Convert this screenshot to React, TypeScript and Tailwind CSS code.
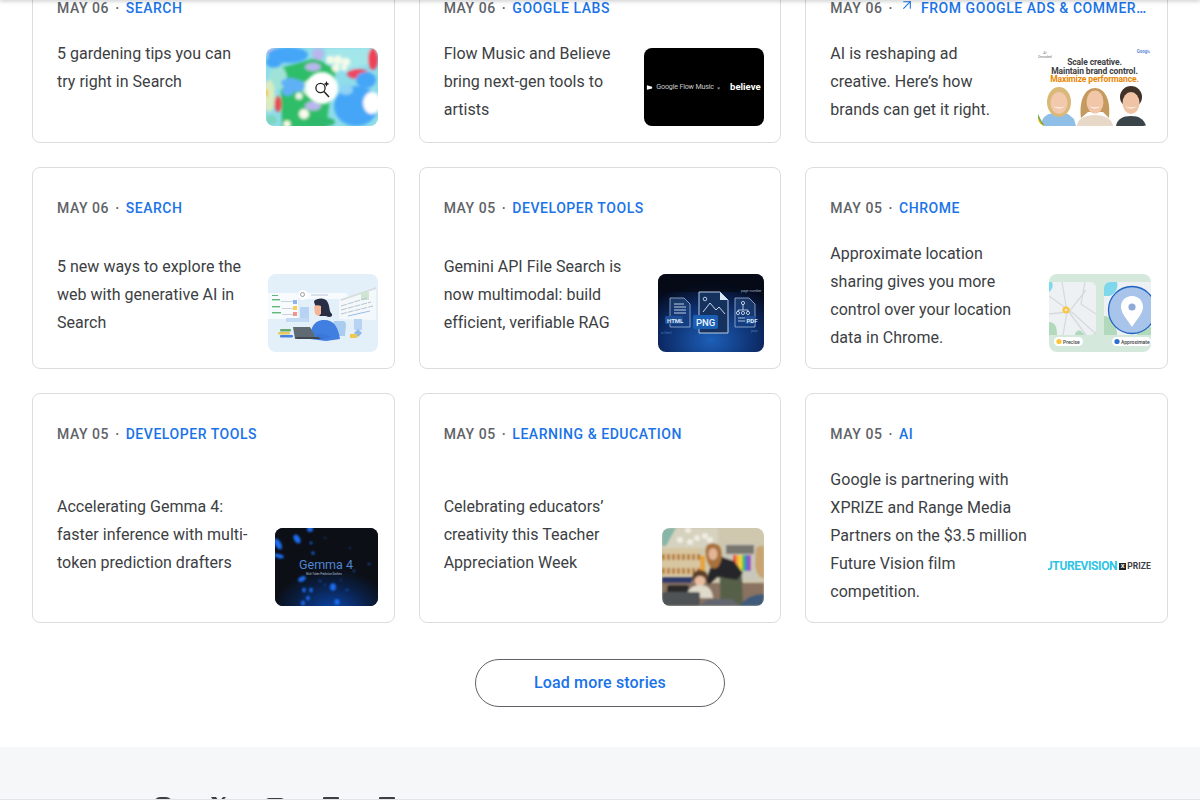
import React from "react";
import { ArrowUpRight } from "lucide-react";

const Flower = () => (
  <svg viewBox="0 0 112 78" className="w-full h-full block">
    <defs>
      <filter id="b1" x="-20%" y="-20%" width="140%" height="140%"><feGaussianBlur stdDeviation="1.5" /></filter>
    </defs>
    <rect width="112" height="78" fill="#8fdcea" />
    <g filter="url(#b1)">
      <path d="M14 20L50 10l20 12-6 28-4 30H16z" fill="#2fbd68" />
      <ellipse cx="12" cy="30" rx="9" ry="12" fill="#9fe3d8" />
      <ellipse cx="45" cy="40" rx="9" ry="8" fill="#c8f0d6" />
      <path d="M60 0h52v14l-30 8-22-8z" fill="#a3e6ea" />
      <path d="M0 0h14l-4 6H0z" fill="#c3c0f0" />
      <ellipse cx="22" cy="7" rx="20" ry="8" fill="#45a6f8" />
      <ellipse cx="8" cy="14" rx="8" ry="6" fill="#45a6f8" />
      <ellipse cx="52" cy="6" rx="6" ry="6" fill="#b9b6ee" />
      <ellipse cx="47" cy="19" rx="8" ry="4" fill="#b9b6ee" />
      <circle cx="64" cy="12" r="4" fill="#f4fbe8" />
      <circle cx="72" cy="12" r="4.5" fill="#f4fbe8" />
      <circle cx="80" cy="14" r="4" fill="#f4fbe8" />
      <circle cx="70" cy="20" r="4" fill="#f4fbe8" />
      <circle cx="78" cy="20" r="3" fill="#f4fbe8" />
      <ellipse cx="92" cy="26" rx="11" ry="5" fill="#ef4660" />
      <ellipse cx="107" cy="11" rx="5" ry="11" fill="#ef4058" />
      <ellipse cx="24" cy="35" rx="9" ry="5" fill="#5eb0f6" />
      <ellipse cx="32" cy="38" rx="7" ry="6" fill="#5eb0f6" />
      <ellipse cx="22" cy="43" rx="6" ry="5" fill="#5eb0f6" />
      <ellipse cx="3" cy="48" rx="6" ry="16" fill="#d9ecc0" />
      <ellipse cx="0" cy="45" rx="2" ry="4" fill="#f5c518" />
      <ellipse cx="12" cy="56" rx="3.5" ry="8" fill="#ea4a55" />
      <circle cx="33" cy="48" r="3.5" fill="#eef9e8" />
      <ellipse cx="47" cy="58" rx="8" ry="4.5" fill="#b9b6ee" />
      <circle cx="38" cy="66" r="5" fill="#f8fbee" />
      <ellipse cx="90" cy="58" rx="22" ry="20" fill="#45a6f8" />
      <ellipse cx="100" cy="32" rx="10" ry="8" fill="#45a6f8" />
      <ellipse cx="80" cy="42" rx="7" ry="5" fill="#8ed2f6" />
      <ellipse cx="106" cy="55" rx="9" ry="11" fill="#ffffff" />
      <ellipse cx="55" cy="74" rx="14" ry="5" fill="#2fb86c" />
      <circle cx="21" cy="76" r="3.5" fill="#fbfbe8" />
      <ellipse cx="5" cy="72" rx="6" ry="5" fill="#7ad6c0" />
    </g>
    <circle cx="56" cy="40" r="16" fill="#fff" filter="url(#b1)" />
    <circle cx="54.5" cy="40" r="4.6" fill="none" stroke="#222" strokeWidth="1.3" />
    <path d="M58 43.5L63 49" stroke="#222" strokeWidth="1.5" />
    <path d="M60.5 33l.9 2 2 .9-2 .9-.9 2-.9-2-2-.9 2-.9z" fill="#222" />
  </svg>
);

const Flow = () => (
  <div className="w-full h-full bg-black flex items-center justify-start pl-[2px] whitespace-nowrap text-white font-['Roboto',sans-serif]">
    <svg viewBox="0 0 8 8" className="w-[7px] h-[7px] shrink-0"><path d="M1 1.5l6 1.5v2l-6 1.5z" fill="#fff" /></svg>
    <span className="text-[7.2px] tracking-[-0.2px] ml-[3px] text-[#c9c9c9]">Google Flow Music</span>
    <span className="text-[6px] ml-[3px] mr-[10px] text-[#aaa]">×</span>
    <span className="text-[9.5px] font-bold">believe</span>
  </div>
);

const Ads = () => (
  <div className="relative w-full h-full bg-white overflow-hidden font-['Roboto',sans-serif] text-center">
    <div className="pt-[10px] text-[8.5px] leading-[8.5px] font-bold text-[#3c4043] tracking-[-0.1px]">
      <div>Scale creative.</div>
      <div>Maintain brand control.</div>
      <div className="text-[#ea8600]">Maximize performance.</div>
    </div>
    <div className="absolute left-0 top-[4px] text-[3.5px] leading-[3.5px] text-[#777]">
      AI<br />Decoded
    </div>
    <div className="absolute right-0 top-[1px] text-[4.5px] font-bold text-[#5f8dd8]">Google</div>
    <svg viewBox="0 0 113 78" className="absolute inset-0 w-full h-full">
      <defs><filter id="b2"><feGaussianBlur stdDeviation="0.5" /></filter></defs>
      <g filter="url(#b2)">
        <path d="M3 78c0-6 3-10 8-12l10-2 9 2 6 5 2 7z" fill="#8fbfe6" />
        <ellipse cx="21" cy="54" rx="12" ry="15" fill="#d9b878" />
        <ellipse cx="21" cy="55" rx="8.5" ry="11" fill="#f2c9ad" />
        <path d="M15 58q6 5 12 0-6 3-12 0" fill="#fff" />
        <path d="M39 78c0-6 6-11 18-11s17 5 18 11z" fill="#e8d8c8" />
        <path d="M43 70c-2-18 4-30 14-30s16 12 14 30l-6-6H50z" fill="#c59a5e" />
        <ellipse cx="57" cy="54" rx="8.5" ry="11.5" fill="#f2c6a8" />
        <path d="M51 58q6 5 12 0-6 3-12 0" fill="#fff" />
        <path d="M78 78c1-7 7-10 15-10s13 3 15 10z" fill="#3b444a" />
        <ellipse cx="93" cy="49" rx="11" ry="11" fill="#3f3028" />
        <ellipse cx="93" cy="55" rx="8.5" ry="11" fill="#efc3a4" />
        <path d="M87 58q6 5 12 0-6 3-12 0" fill="#fff" />
        <path d="M0 66l4 8 3 4H0z" fill="#74a846" />
        <path d="M0 70l5 8H0z" fill="#f4b400" />
      </g>
    </svg>
  </div>
);

const Person = () => (
  <svg viewBox="0 0 110 78" className="w-full h-full block">
    <defs><filter id="b3"><feGaussianBlur stdDeviation="0.4" /></filter></defs>
    <rect width="110" height="78" fill="#e3f0fa" />
    <g filter="url(#b3)">
      <rect x="0" y="19" width="30" height="26" fill="#f7fbfe" />
      <rect x="4" y="21" width="6" height="1" fill="#5fb878" />
      <rect x="4" y="25" width="8" height="1.4" fill="#5fb878" />
      <rect x="4" y="32" width="8" height="1.4" fill="#5fb878" />
      <rect x="4" y="38" width="9" height="1.4" fill="#5fb878" />
      <rect x="13" y="27" width="12" height="1" fill="#c9d3dc" />
      <rect x="14" y="34" width="11" height="1" fill="#c9d3dc" />
      <rect x="14" y="40" width="11" height="1" fill="#c9d3dc" />
      <rect x="25" y="26" width="4" height="4" fill="#8db4ee" />
      <rect x="25" y="32" width="4" height="4" fill="#f6cf5a" />
      <rect x="25" y="38" width="4" height="4" fill="#f2958a" />
      <rect x="30" y="19" width="50" height="6" rx="3" fill="#f7fbfe" />
      <circle cx="35" cy="21" r="5" fill="#fff" />
      <circle cx="34.5" cy="20.5" r="2" fill="none" stroke="#777" strokeWidth="0.7" />
      <rect x="43" y="20.5" width="17" height="1" fill="#b9c8d8" />
      <rect x="32" y="33" width="9" height="15" fill="#b7d3f4" />
      <rect x="18" y="44" width="22" height="4" fill="#c3daf4" />
      <path d="M71 26l37-13v33l-37-1z" fill="#f4f8fa" />
      <path d="M73 25l35-12v2l-35 12z" fill="#d6dee0" />
      <rect x="93" y="18" width="8" height="8" fill="#cfe5d2" />
      <path d="M73 32l26-8M73 36l30-8M73 40l32-8" stroke="#aebdcd" strokeWidth="0.9" strokeDasharray="6 1" />
      <path d="M80 42l22-5" stroke="#8fb5e6" strokeWidth="0.9" />
      <path d="M66 47h9c2 0 3 2 3 4l-1 11H64z" fill="#a9cdf0" />
      <g transform="translate(-5 3)">
        <path d="M47 62c0-9 3-19 14-19s14 8 16 19l-14 2z" fill="#3f7ee0" />
        <path d="M51 24c3-3 12-4 14 2 2 4 1 9 4 11 1 3-3 4-6 2h-6c-3-2-1-5-3-7-1-3-3-5-3-8z" fill="#2a2f45" />
        <path d="M51 29c2-1 5-1 7 0v8l-3 2-3-2z" fill="#f5b698" />
        <path d="M30 50h17l6 11-21 1z" fill="#5f6a72" />
        <path d="M32 60h28v2H34z" fill="#3f484f" />
        <path d="M50 56l14 2 4 2-10 2z" fill="#3a76da" />
      </g>
      <rect x="12" y="55" width="11" height="2.5" rx="1" fill="#66a96b" />
      <rect x="10" y="58" width="12" height="2.5" rx="1" fill="#e8c75f" />
      <rect x="12" y="61" width="13" height="2.5" rx="1" fill="#4a82dc" />
      <rect x="86" y="45" width="8" height="11" fill="#b9d3f3" />
      <path d="M86 59l4-4 4 4-4 4z" fill="#8fb7ea" />
      <path d="M83 63c0-4 6-4 6 0z" fill="#f5cf55" />
      <rect x="82" y="60" width="7" height="4" fill="#f0c84e" />
    </g>
  </svg>
);

const Png = () => (
  <svg viewBox="0 0 106 78" className="w-full h-full block">
    <defs>
      <radialGradient id="pg" cx="50%" cy="85%" r="75%">
        <stop offset="0%" stopColor="#1d5fb8" />
        <stop offset="60%" stopColor="#0d2c6a" />
        <stop offset="100%" stopColor="#050a1c" />
      </radialGradient>
      <linearGradient id="pf" x1="0" y1="0" x2="0" y2="1">
        <stop offset="0%" stopColor="#2a4e80" stopOpacity="0.6" />
        <stop offset="100%" stopColor="#123f86" stopOpacity="0.5" />
      </linearGradient>
    </defs>
    <rect width="106" height="78" fill="url(#pg)" />
    <rect width="106" height="18" fill="#060a14" opacity="0.7" />
    <path d="M12 24h14l6 6v23H12z" fill="url(#pf)" stroke="#9db8d8" strokeWidth="0.8" />
    <path d="M16 30h10M16 33h12M16 36h12M16 39h12" stroke="#cfe0f2" strokeWidth="0.9" />
    <rect x="7" y="42" width="18" height="8" rx="1.5" fill="#1e4f96" />
    <text x="9" y="48.5" fontSize="6" fontWeight="700" fill="#dbe8f7" fontFamily="Roboto">HTML</text>
    <path d="M77 24h14l6 6v23H77z" fill="url(#pf)" stroke="#9db8d8" strokeWidth="0.8" />
    <path d="M85 30v3M80 38v-2h10v2M85 33v3" stroke="#dbe8f7" strokeWidth="0.8" fill="none" />
    <circle cx="85" cy="29" r="1.6" fill="none" stroke="#dbe8f7" strokeWidth="0.8" />
    <circle cx="80" cy="39" r="1.6" fill="none" stroke="#dbe8f7" strokeWidth="0.8" />
    <circle cx="85" cy="39" r="1.6" fill="none" stroke="#dbe8f7" strokeWidth="0.8" />
    <circle cx="90" cy="39" r="1.6" fill="none" stroke="#dbe8f7" strokeWidth="0.8" />
    <path d="M80 44h7M80 47h7" stroke="#dbe8f7" strokeWidth="0.8" />
    <rect x="87" y="42" width="11" height="8" rx="1.5" fill="#1e4f96" />
    <text x="88.5" y="48.5" fontSize="6" fontWeight="700" fill="#dbe8f7" fontFamily="Roboto">PDF</text>
    <path d="M41 18h21l8 8v33H41z" fill="#15325f" stroke="#b9cce3" strokeWidth="1" />
    <path d="M62 18v8h8z" fill="#dbe8f7" />
    <circle cx="47" cy="25" r="1.8" fill="none" stroke="#dbe8f7" strokeWidth="0.8" />
    <path d="M45 38l7-9 6 7 3-3 6 7" fill="none" stroke="#dbe8f7" strokeWidth="0.9" />
    <rect x="35" y="41" width="25" height="14" rx="2" fill="#1a5fb4" />
    <text x="38" y="52" fontSize="9.5" fontWeight="500" fill="#f0f6ff" fontFamily="Roboto">PNG</text>
    <text x="83" y="18" fontSize="3.5" fill="#9fb6d0" fontFamily="Roboto">page number</text>
    <text x="3" y="60" fontSize="3.5" fill="#4a7fc0" fontFamily="Roboto">ic html</text>
    <text x="93" y="58" fontSize="3.5" fill="#4a7fc0" fontFamily="Roboto">json</text>
  </svg>
);

const Map = () => (
  <svg viewBox="0 0 102 78" className="w-full h-full block">
    <rect width="102" height="78" fill="#d5e8dc" />
    <path d="M0 8h41a6 6 0 0 1 6 6v41a6 6 0 0 1-6 6H0z" fill="#eef1f4" />
    <path d="M0 8h3a8 8 0 0 1-3 10z" fill="#80d8ec" />
    <path d="M0 48c6 0 8 5 8 13H0z" fill="#b2d9bb" />
    <path d="M26 61c0-4 4-6 7-3s3 3 3 3z" fill="#b2d9bb" />
    <path d="M0 22l25 18 22 20M0 40l20-2 17-22M13 8l5 30-4 23M36 8l-4 22 15 10M20 38l17 23" stroke="#d6d9dd" strokeWidth="1.3" fill="none" />
    <circle cx="17" cy="36" r="3.6" fill="#fbc63d" />
    <circle cx="17" cy="36" r="1.3" fill="#f6f0d8" />
    <rect x="5" y="63" width="29" height="9" rx="4.5" fill="#fff" />
    <circle cx="10" cy="67.5" r="2.6" fill="#fbc63d" />
    <text x="14" y="69.5" fontSize="5" fontWeight="500" fill="#3c4043" fontFamily="Roboto">Precise</text>
    <path d="M55 14a6 6 0 0 1 6-6h41v53H55z" fill="#eef1f4" />
    <path d="M55 14a6 6 0 0 1 6-6h7c2 6-3 14-9 14h-4z" fill="#7ed7ea" />
    <path d="M55 42c8 0 13 8 13 19H55z" fill="#b2d9bb" />
    <path d="M88 61c0-6 4-8 14-8v8z" fill="#b2d9bb" />
    <circle cx="83" cy="36" r="23.5" fill="#a8c4ea" stroke="#1f63c4" strokeWidth="1.3" />
    <path d="M83 22c-7 0-11 5-11 11 0 7 7 13 11 20 4-7 11-13 11-20 0-6-4-11-11-11z" fill="#fff" />
    <circle cx="83" cy="33" r="3.6" fill="#8fa9d8" />
    <rect x="63" y="63" width="39" height="9" rx="4.5" fill="#fff" />
    <circle cx="68" cy="67.5" r="2.6" fill="#2f6fd0" />
    <text x="72" y="69.5" fontSize="5" fontWeight="500" fill="#3c4043" fontFamily="Roboto">Approximate</text>
  </svg>
);

const Gemma = () => (
  <svg viewBox="0 0 103 78" className="w-full h-full block">
    <defs>
      <filter id="b5" x="-20%" y="-20%" width="140%" height="140%"><feGaussianBlur stdDeviation="0.8" /></filter>
      <radialGradient id="gg" cx="55%" cy="110%" r="58%">
        <stop offset="0%" stopColor="#0b49b5" />
        <stop offset="65%" stopColor="#0a1f45" />
        <stop offset="100%" stopColor="#0c0f16" />
      </radialGradient>
    </defs>
    <rect width="103" height="78" fill="#0c0f16" />
    <rect width="103" height="78" fill="url(#gg)" />
    <g fill="#1a6cf0" filter="url(#b5)">
      <ellipse cx="22" cy="11" rx="3" ry="5" transform="rotate(-30 22 11)" />
      <ellipse cx="3" cy="16" rx="3" ry="6" transform="rotate(-30 3 16)" />
      <ellipse cx="4" cy="28" rx="5" ry="2" transform="rotate(15 4 28)" />
      <ellipse cx="35" cy="1" rx="3" ry="3" />
      <circle cx="36" cy="15" r="1.3" />
      <circle cx="38" cy="25" r="1.6" />
      <circle cx="50" cy="10" r="0.7" />
      <circle cx="75" cy="20" r="0.7" />
      <circle cx="94" cy="36" r="1" />
      <circle cx="79" cy="43" r="1" />
      <ellipse cx="27" cy="51" rx="4" ry="2.5" transform="rotate(-25 27 51)" />
      <ellipse cx="29" cy="62" rx="1.8" ry="2.6" />
      <ellipse cx="36" cy="62" rx="1.8" ry="2.6" />
      <ellipse cx="33" cy="70" rx="1.8" ry="2.5" />
      <ellipse cx="58" cy="59" rx="3" ry="3.8" />
      <ellipse cx="62" cy="74" rx="2.6" ry="3" />
      <ellipse cx="28" cy="75" rx="2" ry="2.5" />
      <circle cx="45" cy="53" r="0.9" />
      <circle cx="50" cy="57" r="0.8" />
      <circle cx="72" cy="62" r="0.9" />
      <circle cx="66" cy="52" r="0.7" />
    </g>
    <text x="24" y="41" fontSize="12.5" fill="#4f86d4" fontFamily="Roboto">Gemma 4</text>
    <text x="31" y="46.5" fontSize="2.6" fill="#b8c2d0" fontFamily="Roboto">Multi-Token Prediction Drafters</text>
  </svg>
);

const Teacher = () => (
  <svg viewBox="0 0 102 78" className="w-full h-full block">
    <defs><filter id="b6" x="-10%" y="-10%" width="120%" height="120%"><feGaussianBlur stdDeviation="0.8" /></filter></defs>
    <rect width="102" height="78" fill="#cfc7ae" />
    <g filter="url(#b6)">
      <rect x="0" y="0" width="56" height="20" fill="#d6d2bf" />
      <path d="M0 0h14L4 18H0z" fill="#86b6a8" />
      <circle cx="26" cy="2" r="3" fill="#f0ece2" />
      <circle cx="18" cy="12" r="3" fill="#f0ece2" />
      <circle cx="28" cy="14" r="3" fill="#f0ece2" />
      <circle cx="35" cy="10" r="3" fill="#f0ece2" />
      <circle cx="43" cy="8" r="3" fill="#f0ece2" />
      <circle cx="48" cy="12" r="3" fill="#f0ece2" />
      <rect x="0" y="20" width="38" height="28" fill="#d8c6a0" />
      <path d="M0 29h38M0 43h38" stroke="#b87a2a" strokeWidth="6" strokeDasharray="3 2" />
      <rect x="0" y="49" width="30" height="6" fill="#2f3a6a" />
      <rect x="0" y="55" width="102" height="23" fill="#8a7360" />
      <rect x="62" y="16" width="34" height="36" fill="#c9c7bb" />
      <rect x="64" y="17" width="28" height="9" fill="#77776f" />
      <rect x="38" y="28" width="5" height="16" fill="#e8a33a" />
      <rect x="71" y="27" width="3" height="16" fill="#e84a3a" />
      <rect x="74" y="27" width="3" height="16" fill="#f0a83a" />
      <rect x="77" y="27" width="3" height="16" fill="#f0d83a" />
      <rect x="80" y="27" width="3" height="16" fill="#58b858" />
      <rect x="83" y="27" width="3" height="16" fill="#3a78d8" />
      <rect x="86" y="27" width="3" height="16" fill="#a048b8" />
      <rect x="5" y="57" width="22" height="10" rx="3" fill="#2a2a2c" />
      <path d="M58 50l22-3 1 31H58z" fill="#56614a" />
      <path d="M50 36l10-7 12 4 9 12-6 7-20-3-8 8-3-4z" fill="#26282a" />
      <path d="M44 19c2-5 11-5 14 0 3 7 2 14-2 20-4 3-8 1-10-4-2-5-3-11-2-16z" fill="#a8713e" />
      <ellipse cx="51" cy="26" rx="4.5" ry="6" fill="#e3b596" />
      <ellipse cx="38" cy="50" rx="8" ry="8" fill="#5c3f2c" />
      <ellipse cx="38" cy="53" rx="5.5" ry="5" fill="#e8bd9f" />
      <path d="M24 70c1-8 6-13 14-13s12 4 13 13z" fill="#e0dacb" />
      <rect x="0" y="64" width="38" height="14" rx="2" fill="#4f5256" />
      <path d="M38 78c2-4 6-7 12-7h20l8 7z" fill="#62666e" />
      <path d="M94 20c5-4 8-2 8 0v30c-6 0-9-8-9-14z" fill="#c9a470" />
      <path d="M78 78c4-8 14-12 24-12v12z" fill="#3f5a7a" />
    </g>
  </svg>
);

const Vision = () => (
  <div className="w-full flex items-center justify-end overflow-hidden whitespace-nowrap font-['Roboto',sans-serif]">
    <span className="text-[12px] font-bold text-[#2fc4e4] tracking-[-0.4px] shrink-0">FUTUREVISION</span>
    <span className="w-[7px] h-[7px] bg-[#222] ml-[2px] shrink-0 flex items-center justify-center text-[6px] leading-none text-white font-bold">X</span>
    <span className="text-[8.5px] font-bold text-[#3c4043] ml-[1px] tracking-[0.1px] shrink-0">PRIZE</span>
  </div>
);

type Item = {
  date: string;
  tag: string;
  ext?: boolean;
  lines: string[];
  w: string;
  img: React.ReactNode;
  logo?: boolean;
  pos?: string;
};

const items: Item[] = [
  { date: "MAY 06", tag: "SEARCH", lines: ["5 gardening tips you can", "try right in Search"], w: "w-[112px]", img: <Flower />, pos: "self-start pt-px" },
  { date: "MAY 06", tag: "GOOGLE LABS", lines: ["Flow Music and Believe", "bring next-gen tools to", "artists"], w: "w-[120px]", img: <Flow />, pos: "self-start pt-px" },
  { date: "MAY 06", tag: "FROM GOOGLE ADS & COMMERCE BLOG", ext: true, lines: ["AI is reshaping ad", "creative. Here’s how", "brands can get it right."], w: "w-[113px]", img: <Ads />, pos: "self-start pt-px" },
  { date: "MAY 06", tag: "SEARCH", lines: ["5 new ways to explore the", "web with generative AI in", "Search"], w: "w-[110px]", img: <Person /> },
  { date: "MAY 05", tag: "DEVELOPER TOOLS", lines: ["Gemini API File Search is", "now multimodal: build", "efficient, verifiable RAG"], w: "w-[106px]", img: <Png /> },
  { date: "MAY 05", tag: "CHROME", lines: ["Approximate location", "sharing gives you more", "control over your location", "data in Chrome."], w: "w-[102px]", img: <Map />, pos: "self-start pt-px" },
  { date: "MAY 05", tag: "DEVELOPER TOOLS", lines: ["Accelerating Gemma 4:", "faster inference with multi-", "token prediction drafters"], w: "w-[103px]", img: <Gemma /> },
  { date: "MAY 05", tag: "LEARNING & EDUCATION", lines: ["Celebrating educators’", "creativity this Teacher", "Appreciation Week"], w: "w-[102px]", img: <Teacher /> },
  { date: "MAY 05", tag: "AI", lines: ["Google is partnering with", "XPRIZE and Range Media", "Partners on the $3.5 million", "Future Vision film", "competition."], w: "w-[103px]", img: <Vision />, logo: true, pos: "self-start pt-px" },
];

function Card({ it }: { it: Item }) {
  return (
    <article className="border border-[#dadce0] rounded-lg bg-white pt-[30px] pl-6 pr-4 pb-4 flex flex-col min-w-0">
      <div className="flex items-center h-5 text-sm font-medium whitespace-nowrap tracking-[0.55px]">
        <span className="text-[#5f6368] shrink-0">{it.date}</span>
        <span className="text-[#5f6368] mx-[6px] shrink-0">·</span>
        {it.ext && <ArrowUpRight className="w-[16px] h-[16px] text-[#1a73e8] mr-[6px] mt-[-6px] shrink-0" strokeWidth={1.6} />}
        <span className="text-[#1a73e8] truncate min-w-0">{it.tag}</span>
      </div>
      <div className="flex justify-between mt-[21px] flex-1 min-h-[87px]">
        <p className={`${it.pos ?? "self-center pb-px"} text-[#3c4043] text-base leading-7 whitespace-nowrap font-['Roboto',sans-serif] tracking-[0.02px]`}>
          {it.lines.map((l) => (
            <span key={l} className="block">{l}</span>
          ))}
        </p>
        <div className={`${it.w} h-[78px] shrink-0 self-end rounded-lg overflow-hidden flex items-center ${it.logo ? "mb-[1px]" : ""}`}>
          {it.img}
        </div>
      </div>
    </article>
  );
}

export default function App() {
  return (
    <div className="relative h-[800px] overflow-hidden bg-white font-['Roboto',sans-serif]">
      <div className="absolute top-[-4px] inset-x-0 h-1 bg-white shadow-[0_1px_4px_rgba(60,64,67,0.3)] z-10" />
      <main className="px-8 mt-[-33px] grid grid-cols-3 gap-6">
        {items.map((it, i) => (
          <Card key={i} it={it} />
        ))}
      </main>
      <div className="flex justify-center mt-9">
        <button className="w-[250px] h-12 rounded-full border border-[#5f6368] text-[#1a73e8] text-base font-medium tracking-[0.15px] bg-white">
          Load more stories
        </button>
      </div>
      <footer className="mt-10 bg-[#f6f7f9] h-[200px] pt-[46px]">
        <div className="flex gap-8 pl-[151px] text-[#3c4043]">
          <svg viewBox="0 0 24 24" className="w-6 h-6" fill="none" stroke="currentColor" strokeWidth="2"><rect x="4" y="5" width="16" height="16" rx="5" /></svg>
          <svg viewBox="0 0 24 24" className="w-6 h-6" fill="currentColor"><path d="M4 4h5l11 16h-5zM19 4l-6 7-1-2 4-5z" /></svg>
          <svg viewBox="0 0 24 24" className="w-6 h-6" fill="currentColor"><rect x="3" y="5" width="18" height="14" rx="3" /></svg>
          <svg viewBox="0 0 24 24" className="w-6 h-6" fill="currentColor"><rect x="4" y="4" width="16" height="16" rx="1" /></svg>
          <svg viewBox="0 0 24 24" className="w-6 h-6" fill="currentColor"><rect x="4" y="4" width="16" height="16" rx="1" /></svg>
        </div>
      </footer>
      <div className="absolute bottom-0 inset-x-0 h-px bg-[#e3e4e7] z-10" />
    </div>
  );
}
